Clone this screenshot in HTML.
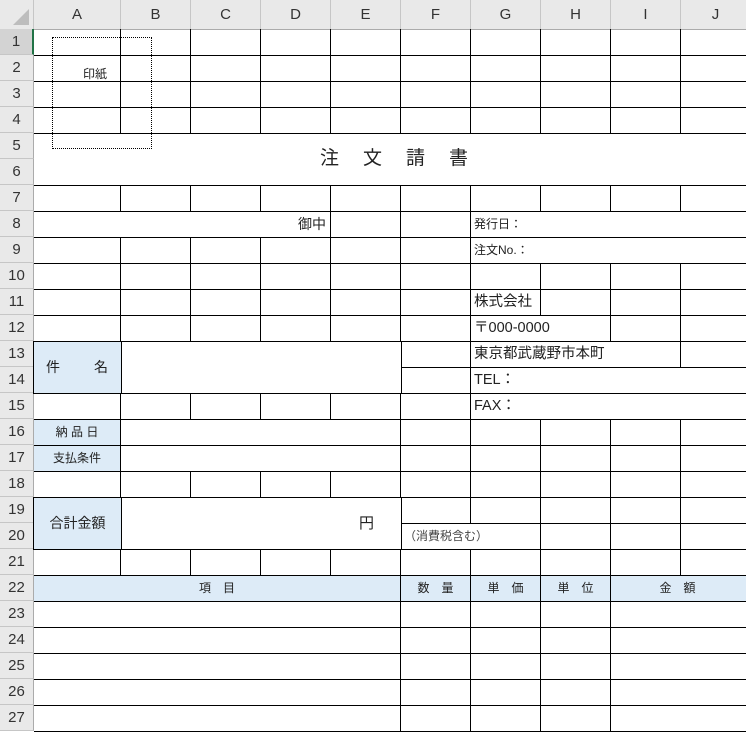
<!DOCTYPE html>
<html><head><meta charset="utf-8"><style>
*{margin:0;padding:0;box-sizing:border-box}
body{width:746px;height:724px;overflow:hidden;background:#fff;position:relative;font-family:"Liberation Sans","Noto Sans CJK JP",sans-serif;color:#222}
.ch{position:absolute;top:0;height:30px;background:#e9e9e9;border-right:1px solid #c6c6c6;border-bottom:1px solid #ababab;font-size:15px;color:#333;text-align:center;line-height:30px}
.rh{position:absolute;left:0;width:34px;height:26px;background:#e9e9e9;border-bottom:1px solid #c6c6c6;border-right:1px solid #ababab;font-size:15px;color:#333;text-align:center;line-height:26px}
.r{position:absolute;display:flex;height:27px;border-top:1px solid #000;border-bottom:1px solid #000;font-size:13px}
.r>div{border-right:1px solid #000;height:100%;flex:none;line-height:24px;white-space:nowrap;overflow:visible}
.b{background:#ddebf7}
.box{position:absolute;border:1px solid #000;font-size:13px}
.w1{width:87px}.w{width:70px}
</style></head><body>
<div class="ch" style="left:0;width:34px"><div style="position:absolute;right:4px;bottom:4px;width:0;height:0;border-left:16px solid transparent;border-bottom:16px solid #bdbdbd"></div></div>
<div class="ch" style="left:34px;width:87px">A</div>
<div class="ch" style="left:121px;width:70px">B</div>
<div class="ch" style="left:191px;width:70px">C</div>
<div class="ch" style="left:261px;width:70px">D</div>
<div class="ch" style="left:331px;width:70px">E</div>
<div class="ch" style="left:401px;width:70px">F</div>
<div class="ch" style="left:471px;width:70px">G</div>
<div class="ch" style="left:541px;width:70px">H</div>
<div class="ch" style="left:611px;width:70px">I</div>
<div class="ch" style="left:681px;width:70px">J</div>
<div class="rh" style="top:29px;background:#d3d3d3;border-right:2px solid #217346">1</div>
<div class="rh" style="top:55px">2</div><div class="rh" style="top:81px">3</div><div class="rh" style="top:107px">4</div>
<div class="rh" style="top:133px">5</div><div class="rh" style="top:159px">6</div><div class="rh" style="top:185px">7</div>
<div class="rh" style="top:211px">8</div><div class="rh" style="top:237px">9</div><div class="rh" style="top:263px">10</div>
<div class="rh" style="top:289px">11</div><div class="rh" style="top:315px">12</div><div class="rh" style="top:341px">13</div>
<div class="rh" style="top:367px">14</div><div class="rh" style="top:393px">15</div><div class="rh" style="top:419px">16</div>
<div class="rh" style="top:445px">17</div><div class="rh" style="top:471px">18</div><div class="rh" style="top:497px">19</div>
<div class="rh" style="top:523px">20</div><div class="rh" style="top:549px">21</div><div class="rh" style="top:575px">22</div>
<div class="rh" style="top:601px">23</div><div class="rh" style="top:627px">24</div><div class="rh" style="top:653px">25</div>
<div class="rh" style="top:679px">26</div><div class="rh" style="top:705px">27</div>

<div class="r" style="left:34px;top:29px;border-top:none;height:27px"><div class="w1"></div><div class="w"></div><div class="w"></div><div class="w"></div><div class="w"></div><div class="w"></div><div class="w"></div><div class="w"></div><div class="w"></div><div class="w"></div></div>
<div class="r" style="left:34px;top:55px"><div class="w1"></div><div class="w"></div><div class="w"></div><div class="w"></div><div class="w"></div><div class="w"></div><div class="w"></div><div class="w"></div><div class="w"></div><div class="w"></div></div>
<div class="r" style="left:34px;top:81px"><div class="w1"></div><div class="w"></div><div class="w"></div><div class="w"></div><div class="w"></div><div class="w"></div><div class="w"></div><div class="w"></div><div class="w"></div><div class="w"></div></div>
<div class="r" style="left:34px;top:107px"><div class="w1"></div><div class="w"></div><div class="w"></div><div class="w"></div><div class="w"></div><div class="w"></div><div class="w"></div><div class="w"></div><div class="w"></div><div class="w"></div></div>
<div style="position:absolute;left:34px;top:133px;width:720px;height:53px;border-bottom:1px solid #000;text-align:center;font-size:19px;line-height:52px;letter-spacing:24px;padding-left:24px;padding-right:0"><span style="position:relative;left:0px">注文請書</span></div>
<div class="r" style="left:34px;top:185px"><div class="w1"></div><div class="w"></div><div class="w"></div><div class="w"></div><div class="w"></div><div class="w"></div><div class="w"></div><div class="w"></div><div class="w"></div><div class="w"></div></div>
<div class="r" style="left:34px;top:211px"><div style="width:297px;text-align:right;padding-right:4px;font-size:14px">御中</div><div class="w"></div><div class="w"></div><div style="width:280px;padding-left:3px;font-size:12px">発行日：</div></div>
<div class="r" style="left:34px;top:237px"><div class="w1"></div><div class="w"></div><div class="w"></div><div class="w"></div><div class="w"></div><div class="w"></div><div style="width:280px;padding-left:3px;font-size:12px">注文No.：</div></div>
<div class="r" style="left:34px;top:263px"><div class="w1"></div><div class="w"></div><div class="w"></div><div class="w"></div><div class="w"></div><div class="w"></div><div class="w"></div><div class="w"></div><div class="w"></div><div class="w"></div></div>
<div class="r" style="left:34px;top:289px"><div class="w1"></div><div class="w"></div><div class="w"></div><div class="w"></div><div class="w"></div><div class="w"></div><div class="w" style="padding-left:3px;font-size:14.5px">株式会社</div><div class="w"></div><div class="w"></div><div class="w"></div></div>
<div class="r" style="left:34px;top:315px"><div class="w1"></div><div class="w"></div><div class="w"></div><div class="w"></div><div class="w"></div><div class="w"></div><div style="width:140px;padding-left:3px;font-size:14.5px">〒000-0000</div><div class="w"></div><div class="w"></div></div>
<div class="box b" style="left:33px;top:341px;width:89px;height:53px;font-size:14px;line-height:51px;padding-left:12px">件<span style="display:inline-block;width:34px"></span>名</div>
<div class="box" style="left:121px;top:341px;width:281px;height:53px"></div>
<div class="r" style="left:401px;top:341px"><div class="w"></div><div style="width:210px;padding-left:3px;font-size:14.5px">東京都武蔵野市本町</div><div class="w"></div></div>
<div class="r" style="left:401px;top:367px"><div class="w"></div><div style="width:280px;padding-left:3px;font-size:14.5px">TEL：</div></div>
<div class="r" style="left:34px;top:393px"><div class="w1"></div><div class="w"></div><div class="w"></div><div class="w"></div><div class="w"></div><div class="w"></div><div style="width:280px;padding-left:3px;font-size:14.5px">FAX：</div></div>
<div class="r" style="left:34px;top:419px"><div class="w1 b" style="text-align:center;font-size:12px">納 品 日</div><div style="width:280px"></div><div class="w"></div><div class="w"></div><div class="w"></div><div class="w"></div><div class="w"></div></div>
<div class="r" style="left:34px;top:445px"><div class="w1 b" style="text-align:center;font-size:12px">支払条件</div><div style="width:280px"></div><div class="w"></div><div class="w"></div><div class="w"></div><div class="w"></div><div class="w"></div></div>
<div class="r" style="left:34px;top:471px"><div class="w1"></div><div class="w"></div><div class="w"></div><div class="w"></div><div class="w"></div><div class="w"></div><div class="w"></div><div class="w"></div><div class="w"></div><div class="w"></div></div>
<div class="box b" style="left:33px;top:497px;width:89px;height:53px;font-size:14px;line-height:51px;text-align:center">合計金額</div>
<div class="box" style="left:121px;top:497px;width:281px;height:53px;font-size:15px;line-height:51px"><span style="position:absolute;left:237px">円</span></div>
<div class="r" style="left:401px;top:497px"><div class="w"></div><div class="w"></div><div class="w"></div><div class="w"></div><div class="w"></div></div>
<div class="r" style="left:401px;top:523px"><div style="width:140px;padding-left:3px;font-size:12px;color:#444">（消費税含む）</div><div class="w"></div><div class="w"></div><div class="w"></div></div>
<div class="r" style="left:34px;top:549px"><div class="w1"></div><div class="w"></div><div class="w"></div><div class="w"></div><div class="w"></div><div class="w"></div><div class="w"></div><div class="w"></div><div class="w"></div><div class="w"></div></div>
<div class="r b" style="left:34px;top:575px;width:720px;font-size:12px"><div style="width:367px;text-align:center">項　目</div><div class="w" style="text-align:center">数　量</div><div class="w" style="text-align:center">単　価</div><div class="w" style="text-align:center">単　位</div><div style="width:140px;text-align:center;padding-right:6px">金　額</div></div>
<div class="r" style="left:34px;top:601px"><div style="width:367px"></div><div class="w"></div><div class="w"></div><div class="w"></div><div style="width:140px"></div></div>
<div class="r" style="left:34px;top:627px"><div style="width:367px"></div><div class="w"></div><div class="w"></div><div class="w"></div><div style="width:140px"></div></div>
<div class="r" style="left:34px;top:653px"><div style="width:367px"></div><div class="w"></div><div class="w"></div><div class="w"></div><div style="width:140px"></div></div>
<div class="r" style="left:34px;top:679px"><div style="width:367px"></div><div class="w"></div><div class="w"></div><div class="w"></div><div style="width:140px"></div></div>
<div class="r" style="left:34px;top:705px"><div style="width:367px"></div><div class="w"></div><div class="w"></div><div class="w"></div><div style="width:140px"></div></div>
<div style="position:absolute;left:52px;top:37px;width:100px;height:112px;border:1px dotted #000"></div>
<div style="position:absolute;left:83px;top:67px;font-size:12px;line-height:14px">印紙</div>
</body></html>
